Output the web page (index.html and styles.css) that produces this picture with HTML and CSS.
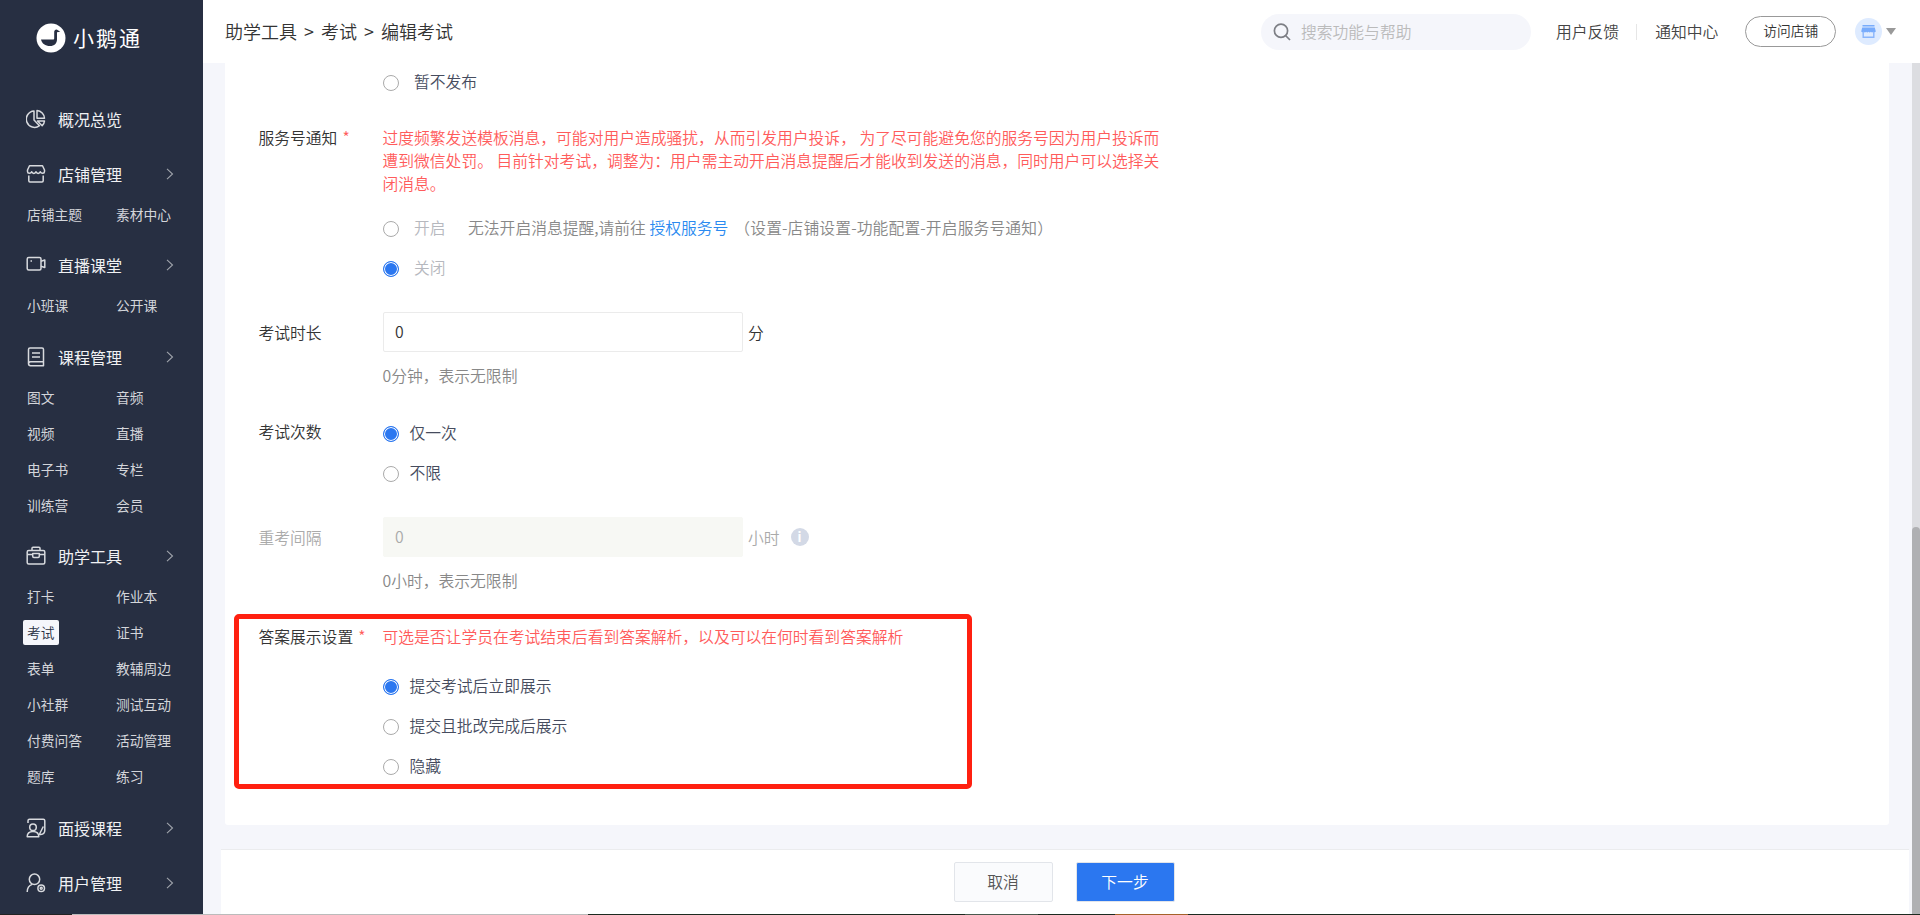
FILE: index.html
```html
<!DOCTYPE html>
<html lang="zh-CN">
<head>
    <meta charset="UTF-8">
    <meta name="viewport" content="width=device-width, initial-scale=1.0">
    <title>编辑考试</title>
    <link rel="stylesheet" href="styles.css">
</head>
<body>
    <aside class="sidebar">
        <div class="logo">
            <svg width="30" height="30" viewBox="0 0 30 30">
                <circle cx="15" cy="15" r="14.5" fill="#fff"/>
                <path d="M5 16.500h12c.8 0 1.200-.4 1.200-1.200V8.800c0-2.300 2.400-3.200 3.700-1.600l2.300 1.500-3.200.5v7c0 4.200-2.600 6.800-7 6.800-4.700 0-8-2.300-9-6.500z" fill="#272f42"/>
            </svg>
            <span>小鹅通</span>
        </div>
        <nav class="menu">
            <div class="group">
                <div class="title">
                    <svg class="icon" viewBox="0 0 20 20"><path d="M8 2a8.200 8.200 0 1 0 5.500 14.700L8 11z"/><path d="M11 1.500v7.700h7.500A8 8 0 0 0 11 1.500z"/><path d="M11.500 12h7c-.2 1.900-1 3.500-2.300 4.700z"/></svg>
                    <span>概况总览</span>
                </div>
            </div>
            <div class="group">
                <div class="title">
                    <svg class="icon" viewBox="0 0 20 20"><path d="M3.500 1.800h13l2 4.200v1.500c0 2.400-3.400 2.400-4.200.3-.8 2.100-3.500 2.100-4.300 0-.8 2.100-3.500 2.100-4.300 0-.8 2.100-4.200 2.100-4.200-.3V6z"/><path d="M2.800 11.500v5.300q0 1.200 1.200 1.200h12q1.200 0 1.200-1.200v-5.300"/></svg>
                    <span>店铺管理</span>
                    <svg class="arrow" viewBox="0 0 8 12"><path d="M1 .8 6.500 6 1 11.200"/></svg>
                </div>
                <div class="links"><a>店铺主题</a><a>素材中心</a></div>
            </div>
            <div class="group">
                <div class="title">
                    <svg class="icon" viewBox="0 0 20 20"><rect x="1.200" y="2.500" width="13.800" height="12.500" rx="1.500"/><path d="M15 6.200l3.800-1.200v7.500L15 11.300M4.500 6h1.500"/></svg>
                    <span>直播课堂</span>
                    <svg class="arrow" viewBox="0 0 8 12"><path d="M1 .8 6.500 6 1 11.200"/></svg>
                </div>
                <div class="links"><a>小班课</a><a>公开课</a></div>
            </div>
            <div class="group">
                <div class="title">
                    <svg class="icon" viewBox="0 0 20 20"><path d="M17.500 14.800H4.500a2 2 0 0 0-2 2V2.500q0-1.500 1.500-1.500h12q1.500 0 1.500 1.500zM2.500 16.500q0 2.200 2 2.200h13v-4M6 6h8M6 10h8"/></svg>
                    <span>课程管理</span>
                    <svg class="arrow" viewBox="0 0 8 12"><path d="M1 .8 6.500 6 1 11.200"/></svg>
                </div>
                <div class="links">
                    <a>图文</a><a>音频</a>
                    <a>视频</a><a>直播</a>
                    <a>电子书</a><a>专栏</a>
                    <a>训练营</a><a>会员</a>
                </div>
            </div>
            <div class="group">
                <div class="title">
                    <svg class="icon" viewBox="0 0 20 20"><rect x="1.200" y="4.500" width="17.600" height="13.500" rx="1.500"/><path d="M6 4.500V2.300q0-1 1-1h6q1 0 1 1v2.200M1.200 8.500h5.500M13.300 8.500h5.500M6.700 7.500h6.600v2.800q0 1.200-1.200 1.200H7.900q-1.200 0-1.200-1.200z"/></svg>
                    <span>助学工具</span>
                    <svg class="arrow" viewBox="0 0 8 12"><path d="M1 .8 6.500 6 1 11.200"/></svg>
                </div>
                <div class="links">
                    <a>打卡</a><a>作业本</a>
                    <a class="active">考试</a><a>证书</a>
                    <a>表单</a><a>教辅周边</a>
                    <a>小社群</a><a>测试互动</a>
                    <a>付费问答</a><a>活动管理</a>
                    <a>题库</a><a>练习</a>
                </div>
            </div>
            <div class="group">
                <div class="title">
                    <svg class="icon" viewBox="0 0 20 20"><path d="M2 5V2.700q0-1.500 1.500-1.500h13.800q1.500 0 1.500 1.500v9.500q0 4-4 4.300h-1.500l4-8"/><circle cx="7" cy="9.300" r="3.300"/><path d="M1.200 18.800c0-3.500 2-5.400 5.800-5.400s5.800 1.900 5.800 5.400z"/></svg>
                    <span>面授课程</span>
                    <svg class="arrow" viewBox="0 0 8 12"><path d="M1 .8 6.500 6 1 11.200"/></svg>
                </div>
            </div>
            <div class="group">
                <div class="title">
                    <svg class="icon" viewBox="0 0 20 20"><circle cx="8.500" cy="6.300" r="5.200"/><path d="M1.200 19c0-4.500 1.800-6.500 5-7.600"/><circle cx="15.200" cy="15.200" r="3.300"/><circle cx="15.200" cy="15.200" r="1"/></svg>
                    <span>用户管理</span>
                    <svg class="arrow" viewBox="0 0 8 12"><path d="M1 .8 6.500 6 1 11.200"/></svg>
                </div>
            </div>
        </nav>
    </aside>

    <div class="page">
        <header class="header">
            <div class="breadcrumb">助学工具<i>&gt;</i>考试<i>&gt;</i>编辑考试</div>
            <div class="search">
                <svg width="18" height="18" viewBox="0 0 18 18" fill="none" stroke="#7d7f85" stroke-width="1.700"><circle cx="8" cy="7.700" r="6.600"/><path d="M12.500 12.500l4.500 4.500"/></svg>
                <span>搜索功能与帮助</span>
            </div>
            <div class="header-links"><a>用户反馈</a><a>通知中心</a></div>
            <a class="visit">访问店铺</a>
            <div class="account">
                <svg width="27" height="27" viewBox="0 0 27 27">
                    <circle cx="13.500" cy="13.500" r="13.500" fill="#deebff"/>
                    <path d="M7.500 7h12v1.500h-12zM7.200 9.500h12.600l1 4q-1 1.500-2.500.3-1.200 1.200-2.400 0-1.200 1.200-2.400 0-1.200 1.200-2.400 0-1.200 1.200-2.400 0-1.500 1.200-2.500-.3z" fill="#78acfc"/>
                    <path d="M8.200 14v5.300h10.600V14" fill="none" stroke="#8ab6fc" stroke-width="1.400"/>
                </svg>
                <span class="caret"></span>
            </div>
        </header>

        <main class="content">
            <div class="card">
                <div class="field">
                    <div class="label"></div>
                    <div class="control">
                        <div class="option wide"><span class="radio"></span><span>暂不发布</span></div>
                    </div>
                </div>

                <div class="field notice">
                    <div class="label">服务号通知<em>*</em></div>
                    <div class="control">
                        <p class="warn">过度频繁发送模板消息，可能对用户造成骚扰，从而引发用户投诉， 为了尽可能避免您的服务号因为用户投诉而<br>遭到微信处罚。 目前针对考试，调整为：用户需主动开启消息提醒后才能收到发送的消息，同时用户可以选择关<br>闭消息。</p>
                        <div class="option wide disabled"><span class="radio"></span><span>开启</span><span class="tip">无法开启消息提醒,请前往 <a>授权服务号</a></span><span class="path">（设置-店铺设置-功能配置-开启服务号通知）</span></div>
                        <div class="option wide disabled"><span class="radio checked"></span><span>关闭</span></div>
                    </div>
                </div>

                <div class="field tall duration">
                    <div class="label">考试时长</div>
                    <div class="control">
                        <div class="input-row"><div class="input">0</div><span>分</span></div>
                        <p class="hint">0分钟，表示无限制</p>
                    </div>
                </div>

                <div class="field tall times">
                    <div class="label">考试次数</div>
                    <div class="control">
                        <div class="option"><span class="radio checked"></span><span>仅一次</span></div>
                        <div class="option"><span class="radio"></span><span>不限</span></div>
                    </div>
                </div>

                <div class="field tall interval">
                    <div class="label">重考间隔</div>
                    <div class="control">
                        <div class="input-row"><div class="input">0</div><span>小时</span><b class="info">i</b></div>
                        <p class="hint">0小时，表示无限制</p>
                    </div>
                </div>

                <div class="field answer">
                    <div class="label">答案展示设置<em>*</em></div>
                    <div class="control">
                        <p class="warn">可选是否让学员在考试结束后看到答案解析，以及可以在何时看到答案解析</p>
                        <div class="option"><span class="radio checked"></span><span>提交考试后立即展示</span></div>
                        <div class="option"><span class="radio"></span><span>提交且批改完成后展示</span></div>
                        <div class="option"><span class="radio"></span><span>隐藏</span></div>
                    </div>
                </div>
            </div>
            <div class="scrollbar"><div class="thumb"></div></div>
        </main>

        <footer class="footer">
            <a class="btn">取消</a>
            <a class="btn primary">下一步</a>
        </footer>
    </div>
    <div class="taskbar"></div>
</body>
</html>
```
FILE: styles.css
```css
* {
    box-sizing: border-box;
}
body {
    margin: 0;
    display: flex;
    width: 1920px;
    height: 915px;
    overflow: hidden;
    position: relative;
    font-family: "Noto Sans CJK SC", sans-serif;
    font-size: 15.79px;
    font-weight: 350;
    color: #333;
    background: #f5f6fb;
}
p {
    margin: 0;
}
svg {
    flex: none;
}

/* sidebar */
.sidebar {
    width: 203px;
    flex: none;
    background: #272f42;
    color: #f0f1f3;
    overflow: hidden;
}
.logo {
    display: flex;
    align-items: center;
    height: 76px;
    padding-left: 36px;
    color: #fff;
    font-size: 21px;
    font-weight: 400;
    letter-spacing: 2px;
}
.logo span {
    margin: -2px 0 0 7px;
}
.menu {
    padding-top: 21px;
}
.group {
    display: flow-root;
    margin-bottom: 11px;
}
.title {
    display: flex;
    align-items: center;
    height: 44px;
    padding: 0 29px 0 26px;
    font-size: 16px;
    font-weight: 400;
}
.icon {
    width: 20px;
    height: 20px;
    margin-right: 12px;
    fill: none;
    stroke: #d8dade;
    stroke-width: 1.5;
    stroke-linejoin: round;
}
.arrow {
    width: 8px;
    height: 12px;
    margin-left: auto;
    fill: none;
    stroke: #a0a4ac;
    stroke-width: 1.1;
}
.links {
    display: grid;
    grid-template-columns: 89px 80px;
    margin-bottom: -.6px;
    padding: 1px 0 0 22px;
    font-size: 13.75px;
    font-weight: 400;
    color: #d3d5da;
}
.links a {
    justify-self: start;
    height: 25px;
    margin: 5px 0 6px;
    padding: 0 4px 0 5px;
    line-height: 25px;
    border-radius: 2px;
    white-space: nowrap;
}
.links .active {
    margin-left: 1px;
    padding: 0 4px;
    background: #f5f6fb;
    color: #272f42;
    font-weight: 350;
}

/* header */
.page {
    flex: 1;
    min-width: 0;
    display: flex;
    flex-direction: column;
}
.header {
    display: flex;
    align-items: center;
    height: 63px;
    flex: none;
    padding: 0 22px;
    background: #fff;
}
.breadcrumb {
    width: 1036px;
    margin-top: -2px;
    font-size: 18px;
}
.breadcrumb i {
    font-style: normal;
    display: inline-block;
    width: 24px;
    text-align: center;
}
.search {
    display: flex;
    align-items: center;
    width: 270px;
    height: 36px;
    padding-left: 12px;
    border-radius: 18px;
    background: #f5f6fb;
    color: #bbb;
}
.search span {
    margin-left: 10px;
}
.header-links {
    display: flex;
    margin-left: 7px;
    color: #444;
}
.header-links a {
    padding: 0 17px 0 18px;
    line-height: 16px;
}
.header-links a + a {
    border-left: 1px solid #e6e6e6;
}
.visit {
    width: 91px;
    height: 31px;
    margin-left: 10px;
    line-height: 27px;
    border: 1px solid #999;
    border-radius: 16px;
    text-align: center;
    font-size: 13.75px;
}
.account {
    display: flex;
    align-items: center;
    margin-left: 19px;
}
.caret {
    margin-left: 4px;
    border: 5px solid transparent;
    border-top: 7px solid #999;
    border-bottom: 0;
}

/* form */
.content {
    display: flex;
    justify-content: space-between;
    height: 786px;
    flex: none;
    padding-left: 22px;
}
.card {
    width: 1664px;
    height: 762px;
    padding-left: 33.5px;
    background: #fff;
    border-radius: 0 0 3px 3px;
}
.field {
    display: flex;
    position: relative;
    line-height: 23px;
}
.label {
    width: 124px;
    flex: none;
}
.label em {
    margin-left: 5px;
    font-style: normal;
    color: #ff5b5b;
}
.notice {
    margin-top: 23px;
}
.duration {
    margin-top: 23px;
}
.times {
    margin-top: 27px;
}
.interval {
    margin-top: 23px;
    color: #aaa;
}
.answer {
    margin-top: 33px;
}
.tall .label {
    line-height: 41px;
}
.times .label {
    line-height: 36px;
}
.warn {
    color: #ff5b5b;
    white-space: nowrap;
}
.notice .warn {
    margin-bottom: 14px;
}
.answer .warn {
    margin-bottom: 19px;
}
.option {
    display: flex;
    align-items: center;
    height: 40px;
    color: #464c5e;
    white-space: nowrap;
}
.option > span + span {
    margin: -4px 0 0 11px;
}
.option.wide > span + span {
    margin-left: 15.5px;
}
.option.disabled {
    color: #b6b8be;
}
.option.wide > .tip {
    margin-left: 22.5px;
    color: #888;
}
.option.wide > .path {
    margin-left: 6px;
    color: #888;
    letter-spacing: .12px;
}
.tip a {
    color: #2a8af0;
}
.radio {
    width: 16px;
    height: 16px;
    flex: none;
    border: 1px solid #aaa;
    border-radius: 50%;
}
.radio.checked {
    border-color: #2b77f0;
    background: #2b77f0;
    box-shadow: inset 0 0 0 1px #fff;
}
.input-row {
    display: flex;
    align-items: center;
    height: 40px;
}
.input {
    width: 360px;
    height: 40px;
    margin-right: 5.5px;
    padding-left: 11.5px;
    line-height: 38px;
    border: 1px solid #ebebeb;
    border-radius: 2px;
}
.interval .input {
    background: #f7f8f4;
    border-color: #f7f8f4;
}
.info {
    width: 18px;
    height: 18px;
    margin-left: 11px;
    border-radius: 50%;
    background: #d3d9e6;
    color: #fff;
    font-size: 13px;
    line-height: 17px;
    text-align: center;
}
.hint {
    margin-top: 12px;
    color: #888;
}

/* red frame around the answer settings */
.answer::after {
    content: "";
    box-sizing: border-box;
    position: absolute;
    left: -24.5px;
    top: -11px;
    width: 738px;
    height: 175px;
    border: 5px solid #ff2010;
    border-radius: 5px;
}

.scrollbar {
    width: 8px;
    height: 852px;
    padding-top: 464px;
    background: #dcdde1;
}
.thumb {
    height: 388px;
    border-radius: 4px 4px 0 0;
    background: #afb0b3;
}

/* bottom actions */
.footer {
    display: flex;
    justify-content: center;
    gap: 23px;
    width: 1688px;
    height: 66px;
    margin-left: 18px;
    padding: 12px 2px 0 0;
    background: #fff;
    border-top: 1px solid #ebecee;
}
.btn {
    width: 99px;
    height: 40px;
    line-height: 37px;
    text-align: center;
    border: 1px solid #e2e5ea;
    border-radius: 2px;
    background: #fafbfd;
    color: #555;
}
.btn.primary {
    background: #2b77f0;
    color: #fff;
}
.taskbar {
    position: absolute;
    left: 0;
    bottom: 0;
    width: 100%;
    height: 1px;
    background: linear-gradient(90deg, #222 72px, #bbb 72px 588px, #1c2a20 588px 965px, #4a5a4e 965px 1038px, #1c2a20 1038px 1115px, #a5622a 1115px 1188px, #1c2a20 1188px);
}
```
